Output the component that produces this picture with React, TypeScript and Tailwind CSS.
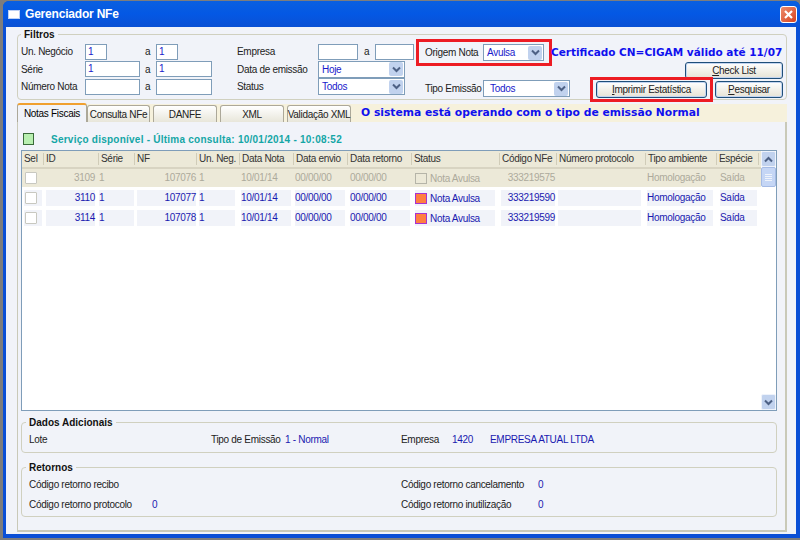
import React from "react";

const F = "font-['Liberation_Sans','Arial',sans-serif] tracking-[-0.3px]";

function Input({ w, v }: { w: string; v?: string }) {
  return (
    <div className={`${w} h-[16px] border border-[#7f9db9] bg-white text-[#1a1acb] text-[10px] leading-[14px] pl-[2px]`}>{v}</div>
  );
}

function Chevron({ up }: { up?: boolean }) {
  return (
    <svg width="9" height="7" viewBox="0 0 9 7">
      <path d={up ? "M1 5.5 L4.5 2 L8 5.5" : "M1 1.5 L4.5 5 L8 1.5"} fill="none" stroke="#4d6185" strokeWidth="2" />
    </svg>
  );
}

function Select({ w, v, pad }: { w: string; v: string; pad?: string }) {
  return (
    <div className={`${w} ${pad || "pl-[3px]"} h-[17px] border border-[#7f9db9] bg-white flex items-center justify-between pr-[1px] text-[#1a1acb] text-[10px]`}>
      <span>{v}</span>
      <span className="w-[14px] h-[14px] rounded-[2px] bg-[#c1d2ee] flex items-center justify-center">
        <Chevron />
      </span>
    </div>
  );
}

function FilterRow({ label, a, b, w1, w2, label2, right }: { label: string; a?: string; b?: string; w1: string; w2: string; label2: string; right: React.ReactNode }) {
  return (
    <div className="flex items-center h-[17.5px] text-[10px] text-[#222]">
      <span className="w-[64px] shrink-0">{label}</span>
      <div className="w-[60px] shrink-0"><Input w={w1} v={a} /></div>
      <span className="w-[11px] shrink-0">a</span>
      <div className="w-[81px] shrink-0"><Input w={w2} v={b} /></div>
      <span className="w-[81px] shrink-0">{label2}</span>
      {right}
    </div>
  );
}

function Btn({ w, children }: { w: string; children: React.ReactNode }) {
  return (
    <div className={`${w} h-[17px] rounded-[3px] border border-[#1f4f7a] bg-gradient-to-b from-white to-[#e6e3d6] shadow-[inset_0_0_0_1px_#c3d5f0] flex items-center justify-center text-[10px] text-[#222]`}>
      {children}
    </div>
  );
}

function Group({ title, cls, legend, children }: { title: string; cls: string; legend: string; children: React.ReactNode }) {
  return (
    <fieldset className={`${cls} border border-[#d0d0bf] rounded-[4px]`}>
      <legend className={`${legend} px-[3px] text-[10px] font-bold tracking-normal leading-[11px] text-[#111]`}>{title}</legend>
      {children}
    </fieldset>
  );
}

const headers = ["Sel", "ID", "Série", "NF", "Un. Neg.", "Data Nota", "Data envio", "Data retorno", "Status", "Código NFe", "Número protocolo", "Tipo ambiente", "Espécie"];
const hw = ["w-[22px]", "w-[55px]", "w-[36px]", "w-[62px]", "w-[43px]", "w-[54px]", "w-[54px]", "w-[64px]", "w-[88px]", "w-[57px]", "w-[89px]", "w-[71px]", "w-[42px]"];

const rows = [
  { id: "3109", nf: "107076", d: "10/01/14", st: false, cod: "333219575" },
  { id: "3110", nf: "107077", d: "10/01/14", st: true, cod: "333219590" },
  { id: "3114", nf: "107078", d: "10/01/14", st: true, cod: "333219599" },
];

function Cell({ w, cls, bg, children }: { w: string; cls?: string; bg: string; children?: React.ReactNode }) {
  return <div className={`${w} h-[16px] shrink-0 leading-[16px] ${bg} ${cls || ""}`}>{children}</div>;
}

function Row({ r }: { r: (typeof rows)[number] }) {
  const off = !r.st;
  const bg = off ? "bg-transparent" : "bg-[#f1f3f9]";
  return (
    <div className={`flex items-center h-[18px] mb-[2px] pl-[2px] text-[10px] whitespace-nowrap ${off ? "bg-[#ece9d8] text-[#acaa9c]" : "text-[#1a1ab0]"}`}>
      <div className={`w-[18px] h-[16px] mr-[4px] shrink-0 flex items-center pl-[1px] ${bg}`}>
        <span className="w-[12px] h-[12px] bg-white border border-[#c8c8c0] rounded-[1px]" />
      </div>
      <Cell w="w-[49px] mr-[4px]" bg={bg} cls="text-right">{r.id}</Cell>
      <Cell w="w-[35px] mr-[3px]" bg={bg}>1</Cell>
      <Cell w="w-[59px] mr-[3px]" bg={bg} cls="text-right">{r.nf}</Cell>
      <Cell w="w-[36px] mr-[6px]" bg={bg}>1</Cell>
      <Cell w="w-[50px] mr-[4px]" bg={bg}>{r.d}</Cell>
      <Cell w="w-[50px] mr-[5px]" bg={bg}>00/00/00</Cell>
      <Cell w="w-[60px] mr-[5px]" bg={bg}>00/00/00</Cell>
      <div className={`w-[80px] mr-[6px] h-[16px] shrink-0 flex items-center gap-[3px] ${bg}`}>
        <span className={`w-[12px] h-[11px] ${off ? "border border-[#b5b4a8]" : "bg-[#ff7f40] border border-[#a832d0]"}`} />
        <span>Nota Avulsa</span>
      </div>
      <Cell w="w-[54px] mr-[3px]" bg={bg} cls="text-right">{r.cod}</Cell>
      <Cell w="w-[83px] mr-[6px]" bg={bg} />
      <Cell w="w-[66px] mr-[7px]" bg={bg}>Homologação</Cell>
      <Cell w="w-[37px]" bg={bg}>Saída</Cell>
    </div>
  );
}

export default function App() {
  return (
    <div className={`${F} w-[800px] h-[540px] bg-[#7d7d7d] overflow-hidden pt-[1px] pl-[3px] whitespace-nowrap`}>
      <div className="w-[797px] h-[537px] rounded-t-[6px] bg-[#0a4fd6] flex flex-col">
        <div className="h-[26px] shrink-0 rounded-t-[6px] bg-gradient-to-b from-[#0a5fe0] via-[#0458e4] to-[#0a50d4] flex items-center pl-[5px] pr-[3px]">
          <span className="w-[12px] h-[9px] bg-white border border-[#bcd0f5]" />
          <span className="ml-[5px] text-white text-[12px] font-bold tracking-[-0.2px]">Gerenciador NFe</span>
          <span className="ml-auto w-[17px] h-[17px] rounded-[3px] border border-white bg-gradient-to-br from-[#ec8a6a] to-[#d6401c] flex items-center justify-center">
            <svg width="11" height="11" viewBox="0 0 11 11"><path d="M2 2 L9 9 M9 2 L2 9" stroke="#fff" strokeWidth="2.2" /></svg>
          </span>
        </div>
        <div className="h-[507px] ml-[3px] mr-[4px] bg-[#f1f3f9] pl-[11px]">
          <Group title="Filtros" legend="ml-0" cls="mt-[2px] h-[71px] w-[770px] pl-[3px]">
            <div className="flex">
              <div className="w-[395px] shrink-0 pt-[3px]">
                <FilterRow label="Un. Negócio" a="1" b="1" w1="w-[22px]" w2="w-[22px]" label2="Empresa"
                  right={<div className="flex items-center"><Input w="w-[40px]" /><span className="w-[17px] pl-[6px]">a</span><Input w="w-[39px]" /></div>} />
                <FilterRow label="Série" a="1" b="1" w1="w-[55px]" w2="w-[56px]" label2="Data de emissão" right={<Select w="w-[87px]" v="Hoje" />} />
                <FilterRow label="Número Nota" w1="w-[55px]" w2="w-[56px]" label2="Status" right={<Select w="w-[87px]" v="Todos" />} />
              </div>
              <div className="w-[174px] shrink-0 text-[10px] text-[#222]">
                <div className="h-[27px] w-[136px] -mt-[1px] border-[3px] border-[#ed1c24] flex items-center pl-[6px]">
                  <span className="w-[58px]">Origem Nota</span>
                  <Select w="w-[61px]" v="Avulsa" />
                </div>
                <div className="mt-[14px] flex items-center pl-[9px]">
                  <span className="w-[58px]">Tipo Emissão</span>
                  <Select w="w-[87px]" v="Todos" pad="pl-[6px]" />
                </div>
              </div>
              <div className="w-[193px] shrink-0 pt-[5px]">
                <div className="-ml-[39px] h-[17px] font-['DejaVu_Sans',sans-serif] font-bold tracking-normal text-[#1010ee] text-[10.5px] leading-[15px]">Certificado CN=CIGAM válido até 11/07</div>
                <div className="flex justify-end"><Btn w="w-[98px]"><span><u>C</u>heck List</span></Btn></div>
                <div className="flex items-center -mt-[2px] justify-between">
                  <div className="w-[123px] h-[25px] border-[3px] border-[#ed1c24] flex items-center justify-center">
                    <Btn w="w-[111px]"><span><u>I</u>mprimir Estatística</span></Btn>
                  </div>
                  <Btn w="w-[68px]"><span><u>P</u>esquisar</span></Btn>
                </div>
              </div>
            </div>
          </Group>

          <div className="mt-[4px] w-[770px] flex items-end h-[18px] bg-[#f6f1dc]">
            <div className="w-[70px] h-[19px] bg-[#f1f3f9] border border-[#aca899] border-b-0 border-t-[2px] border-t-[#f0a030] rounded-t-[3px] text-[10px] flex items-center justify-center relative z-10">Notas Fiscais</div>
            {[["Consulta NFe", "w-[63px]"], ["DANFE", "w-[64px]"], ["XML", "w-[64px]"], ["Validação XML", "w-[64px]"]].map(([t, w], i) => (
              <div key={t} className={`${w} h-[17px] ${i === 0 ? "ml-0" : "ml-[3px]"} bg-gradient-to-b from-white to-[#e8e6da] border border-[#aca899] border-b-0 rounded-t-[3px] text-[10px] text-[#222] flex items-center justify-center`}>{t}</div>
            ))}
            <span className="ml-[10px] h-[18px] leading-[17px] font-['DejaVu_Sans',sans-serif] font-bold tracking-normal text-[#1010ee] text-[10.75px]">O sistema está operando com o tipo de emissão Normal</span>
          </div>

          <div className="w-[770px] h-[410px] border-r-2 border-b-2 border-l border-[#c9c9b8] bg-[#f1f3f9] pl-[3px] pt-[11px]">
            <div className="flex items-center h-[12px] pl-[2px]">
              <span className="w-[11px] h-[12px] bg-[#b8efb0] border border-[#3a6a3a]" />
              <span className="ml-[17px] font-bold text-[10px] tracking-[0.24px] text-[#14a6a6]">Serviço disponível - Última consulta: 10/01/2014 - 10:08:52</span>
            </div>
            <div className="mt-[5px] w-[756px] h-[261px] border border-[#7f9db9] bg-white flex">
              <div className="w-[739px] shrink-0">
                <div className="flex h-[18px] bg-[#ece9d8] border-b-2 border-[#d8d4c2] text-[10px] text-[#333]">
                  {headers.map((h, i) => (
                    <div key={h} className={`${hw[i]} shrink-0 pl-[2px] border-r border-[#d0ccb8] my-[2px] leading-[12px] overflow-hidden`}>{h}</div>
                  ))}
                </div>
                {rows.map((r) => <Row key={r.id} r={r} />)}
              </div>
              <div className="flex-1 bg-white flex flex-col justify-between">
                <div>
                  <div className="h-[16px] bg-[#c1d2ee] rounded-[2px] border border-[#eef3fb] flex items-center justify-center"><Chevron up /></div>
                  <div className="h-[20px] bg-[#c5d6f5] rounded-[2px] border border-[#a5bbe5] flex flex-col items-center justify-center gap-[1px]">
                    <span className="w-[7px] h-[1px] bg-[#eef3fb]" /><span className="w-[7px] h-[1px] bg-[#eef3fb]" /><span className="w-[7px] h-[1px] bg-[#eef3fb]" /><span className="w-[7px] h-[1px] bg-[#eef3fb]" />
                  </div>
                </div>
                <div className="h-[16px] bg-[#c1d2ee] rounded-[2px] border border-[#eef3fb] flex items-center justify-center"><Chevron /></div>
              </div>
            </div>

            <Group title="Dados Adicionais" legend="-ml-[3px]" cls="mt-[6px] w-[756px] h-[36px] text-[10px] pl-[7px]">
              <div className="flex items-center h-[22px] text-[#222]">
                <span className="w-[182px]">Lote</span>
                <span className="w-[74px]">Tipo de Emissão</span>
                <span className="w-[116px] text-[#1a1ab0]">1 - Normal</span>
                <span className="w-[51px]">Empresa</span>
                <span className="w-[38px] text-[#1a1ab0]">1420</span>
                <span className="text-[#1a1ab0]">EMPRESA ATUAL LTDA</span>
              </div>
            </Group>

            <Group title="Retornos" legend="-ml-[3px]" cls="mt-[9px] w-[756px] h-[55px] text-[10px] pl-[7px]">
              <div className="flex flex-col text-[#222]">
                <div className="flex items-center h-[20px] mt-[1px]"><span className="w-[372px]">Código retorno recibo</span><span className="w-[137px]">Código retorno cancelamento</span><span className="text-[#1a1ab0]">0</span></div>
                <div className="flex items-center h-[20px]"><span className="w-[123px]">Código retorno protocolo</span><span className="w-[249px] text-[#1a1ab0]">0</span><span className="w-[137px]">Código retorno inutilização</span><span className="text-[#1a1ab0]">0</span></div>
              </div>
            </Group>
          </div>
        </div>
      </div>
    </div>
  );
}
